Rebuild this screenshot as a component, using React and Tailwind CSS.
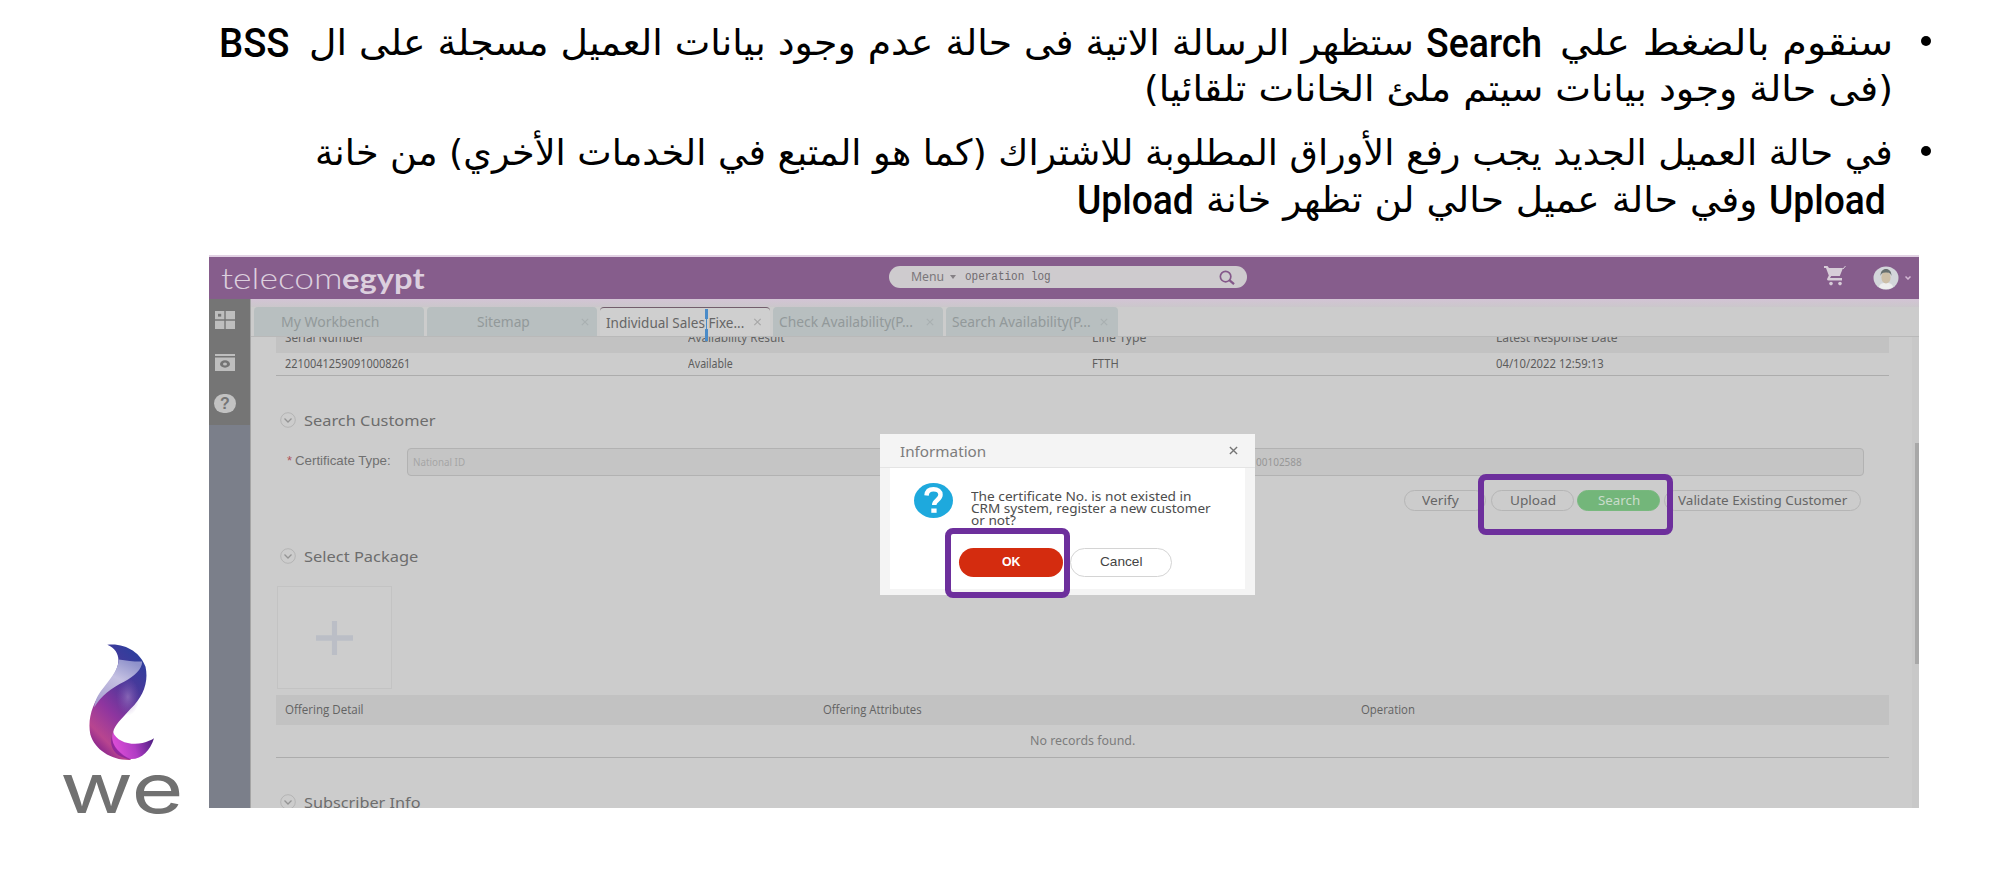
import { useLayoutEffect, useRef, useState } from "react";

// Text squeezed or stretched horizontally to the width of its box.
function Fit({ children, className = "", rtl = false }) {
  const outer = useRef(null);
  const inner = useRef(null);
  const [scale, setScale] = useState(1);
  useLayoutEffect(() => {
    setScale(outer.current.clientWidth / inner.current.offsetWidth);
  }, [children]);
  return (
    <span ref={outer} dir={rtl ? "rtl" : "ltr"} className={`flex shrink-0 ${className}`}>
      <span
        ref={inner}
        className={`block shrink-0 whitespace-nowrap ${rtl ? "origin-right" : "origin-left"}`}
        style={{ transform: `scaleX(${scale})` }}
      >
        {children}
      </span>
    </span>
  );
}

function Bullet() {
  return <span className="mt-[16px] mr-[-38px] ml-[28px] h-[10px] w-[10px] shrink-0 rounded-full bg-black" />;
}

const latin = "font-['Roboto',sans-serif] font-medium text-[41px]";

function Notes() {
  return (
    <div
      dir="rtl"
      className="flex h-[255px] flex-col pt-[20px] pr-[107px] font-['DejaVu_Sans',sans-serif] text-[36px] leading-[46px] text-black"
    >
      <div className="flex h-[46px]">
        <Bullet />
        <Fit rtl className="w-[333px]">سنقوم بالضغط علي</Fit>
        <Fit className={`mr-[18px] w-[116px] ${latin}`}>Search</Fit>
        <Fit rtl className="mr-[12px] w-[1105px]">
          ستظهر الرسالة الاتية فى حالة عدم وجود بيانات العميل مسجلة على ال
        </Fit>
        <Fit className={`mr-[19px] w-[71px] ${latin}`}>BSS</Fit>
      </div>
      <div className="flex h-[46px]">
        <Fit rtl className="w-[749px]">(فى حالة وجود بيانات سيتم ملئ الخانات تلقائيا)</Fit>
      </div>
      <div className="mt-[18px] flex h-[47px]">
        <Bullet />
        <Fit rtl className="w-[1578px]">
          في حالة العميل الجديد يجب رفع الأوراق المطلوبة للاشتراك (كما هو المتبع في الخدمات الأخري) من خانة
        </Fit>
      </div>
      <div className="flex h-[46px] pr-[7px]">
        <Fit className={`w-[117px] ${latin}`}>Upload</Fit>
        <Fit rtl className="mr-[12px] w-[551px]">وفي حالة عميل حالي لن تظهر خانة</Fit>
        <Fit className={`mr-[12px] w-[117px] ${latin}`}>Upload</Fit>
      </div>
    </div>
  );
}

function WeLogo() {
  return (
    <div className="flex w-[209px] shrink-0 flex-col pt-[389px] pl-[60px]">
      <svg className="ml-[29px] h-[117px] w-[65px]" viewBox="147 74 192 350" preserveAspectRatio="none">
        <defs>
          <linearGradient id="body" x1="0.75" y1="0" x2="0.25" y2="1">
            <stop offset="0" stopColor="#2b3f9d" />
            <stop offset="0.35" stopColor="#51379a" />
            <stop offset="0.62" stopColor="#8f359f" />
            <stop offset="0.85" stopColor="#b8458f" />
            <stop offset="1" stopColor="#7d1d8c" />
          </linearGradient>
          <linearGradient id="fold" x1="0.7" y1="0" x2="0.2" y2="1">
            <stop offset="0" stopColor="#8f92cb" />
            <stop offset="0.4" stopColor="#c5c1e2" />
            <stop offset="1" stopColor="#a89fd0" />
          </linearGradient>
          <linearGradient id="tail" x1="0" y1="0.5" x2="1" y2="0.3">
            <stop offset="0" stopColor="#e04fd8" />
            <stop offset="0.5" stopColor="#b03cc4" />
            <stop offset="1" stopColor="#4b1d80" />
          </linearGradient>
          <radialGradient id="sheen" cx="0.5" cy="0.5" r="0.5">
            <stop offset="0" stopColor="#a98acb" stopOpacity="0.55" />
            <stop offset="1" stopColor="#8a60b5" stopOpacity="0" />
          </radialGradient>
        </defs>
        <path
          d="M201 76C255 70 300 100 314 142C324 190 306 232 270 268C242 300 222 318 219 336C212 375 235 400 272 421C215 424 165 392 151 345C142 300 156 252 190 208C226 164 246 128 226 96C220 87 212 81 201 76Z"
          fill="url(#body)"
        />
        <path d="M235 120C262 124 290 128 304 126C304 150 280 170 252 186C212 206 184 228 162 264C166 238 176 222 192 202C218 168 234 146 235 120Z" fill="url(#fold)" />
        <ellipse cx="262" cy="232" rx="34" ry="56" fill="url(#sheen)" />
        <path d="M218 337C228 366 270 378 305 370C320 366 330 362 339 356C327 395 300 421 268 418C232 405 208 375 218 337Z" fill="url(#tail)" />
        <path d="M214 350C216 380 238 405 272 419C232 415 205 390 214 350Z" fill="#8a1f9c" opacity="0.8" />
      </svg>
      <Fit className="mt-[-15px] w-[123px] font-['Inter',sans-serif] text-[69px] leading-[84px] text-[#717171]">we</Fit>
    </div>
  );
}

function Cross({ className }) {
  return (
    <svg viewBox="0 0 10 10" className={`shrink-0 ${className}`} fill="none" stroke="currentColor" strokeWidth="1.5">
      <path d="M1 1l8 8M9 1l-8 8" />
    </svg>
  );
}

function Header() {
  return (
    <header className="flex h-[44px] shrink-0 items-center border-t-2 border-[#e2d2e4] bg-[#865d8c] pl-[12px]">
      <Fit className="mt-[-1px] w-[121px] font-['Lato',sans-serif] text-[29px] font-light leading-[40px] text-[#dccfde]">
        telecom
      </Fit>
      <Fit className="mt-[-1px] w-[83px] font-['Lato',sans-serif] text-[28px] font-bold leading-[40px] text-[#dccfde]">
        egypt
      </Fit>
      <div className="mt-[-2px] ml-[464px] flex h-[22px] w-[358px] shrink-0 items-center rounded-full bg-[#cecbce] pl-[22px]">
        <Fit className="w-[33px] font-['Noto_Sans',sans-serif] text-[13px] text-[#7b777b]">Menu</Fit>
        <svg viewBox="0 0 6 4" className="ml-[6px] h-[4px] w-[6px]" fill="#858085">
          <path d="M0 0h6l-3 4z" />
        </svg>
        <Fit className="ml-[9px] w-[86px] font-['Liberation_Mono',monospace] text-[12px] text-[#706c70]">
          operation log
        </Fit>
        <svg viewBox="0 0 18 16" className="ml-[167px] h-[15px] w-[18px]" fill="none" stroke="#84588a" strokeWidth="1.8">
          <circle cx="7.5" cy="7" r="5.6" />
          <path d="M11.5 10.8l5 4.2" strokeWidth="2.4" />
        </svg>
      </div>
      <svg viewBox="0 0 22 20" className="mt-[-4px] ml-[577px] h-[20px] w-[22px] shrink-0" fill="#d7cdd8">
        <path d="M0 0h3.500l1.500 2H19l-3.200 8H7.200L6 12h12v2.500H4.500c-1.300 0-1.700-1-1.200-2l1.500-3L2 2H0z" />
        <circle cx="7" cy="17.600" r="1.800" />
        <circle cx="16" cy="17.600" r="1.800" />
        <path d="M19 3l2.500-3" stroke="#d7cdd8" />
      </svg>
      <svg viewBox="0 0 26 24" className="ml-[27px] h-[24px] w-[26px] shrink-0">
        <ellipse cx="13" cy="12" rx="12.500" ry="11.500" fill="#d3d6da" />
        <path d="M6 21c1-4 4-4 7-4s6 0 7 4c-4 3-10 3-14 0z" fill="#eeeeee" />
        <ellipse cx="13" cy="11.500" rx="4.600" ry="6" fill="#cdbfa8" />
        <path d="M7.500 10c0-5 2.500-7 5.500-7s5.500 2 5.500 7c-1-3-2.500-3.500-5.500-3.500S8.500 7 7.500 10z" fill="#68706f" />
      </svg>
      <svg viewBox="0 0 6 4" className="ml-[6px] h-[4px] w-[6px] shrink-0" fill="none" stroke="#d3b8d4">
        <path d="M0.500 0.500l2.500 2.500l2.500-2.500" strokeWidth="1.500" />
      </svg>
    </header>
  );
}

function Sidebar() {
  return (
    <aside className="flex w-[42px] shrink-0 flex-col border-r border-[#a5a5a5] bg-[#7b7f8a]">
      <div className="flex h-[126px] flex-col bg-[#757575]">
        <svg viewBox="0 0 20 18" className="mt-[12px] ml-[6px] h-[18px] w-[20px]" fill="#bebebe">
          <path d="M0 0h9.300v8.300H0zM10.700 0H20v8.300h-9.300zM0 9.700h9.300V18H0zM10.700 9.700H20V18h-9.300z" />
          <rect x="3" y="2.800" width="3.200" height="2.800" fill="#757575" />
        </svg>
        <svg viewBox="0 0 20 17" className="mt-[25px] ml-[6px] h-[17px] w-[20px]" fill="#bebebe">
          <path d="M0 0h20v2H0zM0 3.500h20V17H0z" />
          <ellipse cx="10" cy="10" rx="5" ry="3.700" fill="#757575" />
          <ellipse cx="10" cy="10" rx="2" ry="1.500" fill="#bebebe" />
        </svg>
        <span className="mt-[23px] ml-[5px] flex h-[19px] w-[22px] items-center justify-center rounded-full bg-[#c2c2c2] font-['Liberation_Sans',sans-serif] text-[16px] font-bold text-[#757575]">
          ?
        </span>
      </div>
    </aside>
  );
}

const tab = "flex h-[29px] w-[170px] items-center rounded-t-[4px] text-[14px]";
const idle = "bg-[#b8bfc0] text-[#92999a]";

function Tabs() {
  return (
    <nav className="flex h-[38px] shrink-0 flex-col border-b border-[#b9b9b9] bg-[#cccccc]">
      <div className="h-[8px] shrink-0 bg-gradient-to-b from-[#d3c4d5] to-[#cbc7cb]" />
      <div className="flex gap-[3px] pl-[3px] font-['Noto_Sans',sans-serif]">
        <div className={`${tab} ${idle} pl-[27px]`}>
          <Fit className="w-[98px]">My Workbench</Fit>
        </div>
        <div className={`${tab} ${idle} pl-[50px]`}>
          <Fit className="w-[53px]">Sitemap</Fit>
          <Cross className="ml-[51px] h-[8px] w-[8px] text-[#a9b0b1]" />
        </div>
        <div className={`${tab} relative border-t border-[#735d6c] bg-[#cfcfcf] pl-[6px] text-[#666666]`}>
          <Fit className="w-[138px]">Individual Sales Fixe...</Fit>
          <Cross className="ml-[9px] h-[8px] w-[9px] text-[#a7a7a7]" />
          <span className="absolute top-[1px] left-[105px] z-10 h-[10px] w-[3px] bg-[#4a8bc8]" />
          <span className="absolute top-[11px] left-[106px] z-10 h-[10px] w-[1px] bg-[#4a8bc8]" />
          <span className="absolute top-[21px] left-[105px] z-10 h-[12px] w-[3px] bg-[#4a8bc8]" />
        </div>
        <div className={`${tab} ${idle} pl-[6px]`}>
          <Fit className="w-[134px]">Check Availability(P...</Fit>
          <Cross className="ml-[13px] h-[8px] w-[8px] text-[#a9b0b1]" />
        </div>
        <div className={`${tab} ${idle} w-[172px] pl-[6px]`}>
          <Fit className="w-[139px]">Search Availability(P...</Fit>
          <Cross className="ml-[9px] h-[8px] w-[8px] text-[#a9b0b1]" />
        </div>
      </div>
    </nav>
  );
}

function Section({ title, width, className }) {
  return (
    <div className={`flex h-[20px] items-center ${className}`}>
      <svg viewBox="0 0 16 16" className="h-[16px] w-[16px]" fill="none" stroke="#b4b4b4">
        <circle cx="8" cy="8" r="7.300" strokeWidth="1" />
        <path d="M4.500 6.500L8 10l3.500-3.500" stroke="#949494" strokeWidth="1.300" />
      </svg>
      <Fit className={`ml-[8px] font-['Noto_Sans',sans-serif] text-[15px] leading-[20px] text-[#6d6d6d] ${width}`}>
        {title}
      </Fit>
    </div>
  );
}

const pill = "flex h-[21px] shrink-0 items-center justify-center rounded-full border text-[13px]";

function Content() {
  return (
    <div className="flex flex-1 flex-col overflow-hidden pl-[25px] font-['Noto_Sans',sans-serif] text-[#636363]">
      <div className="grid h-[16px] w-[1613px] shrink-0 grid-cols-[403px_404px_404px_402px] overflow-hidden bg-[#c2c2c2] pl-[9px] text-[12px] leading-[16px]">
        <Fit className="mt-[-7px] w-[79px]">Serial Number</Fit>
        <Fit className="mt-[-7px] w-[97px]">Availability Result</Fit>
        <Fit className="mt-[-7px] w-[54px]">Line Type</Fit>
        <Fit className="mt-[-7px] w-[122px]">Latest Response Date</Fit>
      </div>
      <div className="grid h-[23px] w-[1613px] shrink-0 grid-cols-[403px_404px_404px_402px] items-center border-b border-[#acacac] pl-[9px] text-[12px] leading-[16px] text-[#5c5c5c]">
        <Fit className="w-[125px]">22100412590910008261</Fit>
        <Fit className="w-[45px]">Available</Fit>
        <Fit className="w-[27px]">FTTH</Fit>
        <Fit className="w-[108px]">04/10/2022 12:59:13</Fit>
      </div>
      <Section className="mt-[34px] shrink-0 pl-[4px]" title="Search Customer" width="w-[131px]" />
      <div className="mt-[18px] flex h-[28px] shrink-0 items-center pl-[11px]">
        <span className="mt-[-3px] w-[8px] font-['Liberation_Sans',sans-serif] text-[13px] text-[#b0555c]">*</span>
        <Fit className="mt-[-3px] w-[96px] font-['Liberation_Sans',sans-serif] text-[13px] text-[#707070]">
          Certificate Type:
        </Fit>
        <div className="ml-[16px] flex h-[28px] w-[1457px] items-center rounded-[4px] border border-[#b2b2b2] bg-[#c5c5c5] pl-[5px] text-[10px] text-[#a5a5a5]">
          <Fit className="w-[52px]">National ID</Fit>
          <Fit className="ml-[791px] w-[46px] text-[#979797]">00102588</Fit>
        </div>
      </div>
      <div className="mt-[14px] flex h-[21px] shrink-0 pl-[1128px] text-[#666666]">
        <div className={`${pill} w-[82px] border-[#b5b5b5]`}>
          <Fit className="ml-[-10px] w-[37px]">Verify</Fit>
        </div>
        <div className={`${pill} ml-[5px] w-[83px] border-[#b5b5b5]`}>
          <Fit className="w-[46px]">Upload</Fit>
        </div>
        <div className={`${pill} ml-[3px] w-[83px] border-[#78b87e] bg-[#73b67a] text-[#c9dccb]`}>
          <Fit className="w-[42px]">Search</Fit>
        </div>
        <div className={`${pill} ml-[4px] w-[197px] border-[#b5b5b5]`}>
          <Fit className="w-[169px]">Validate Existing Customer</Fit>
        </div>
      </div>
      <Section className="mt-[35px] shrink-0 pl-[4px]" title="Select Package" width="w-[114px]" />
      <div className="mt-[20px] ml-[1px] flex h-[103px] w-[115px] shrink-0 items-center justify-center border border-[#c3c3c3] bg-[#cdcdcd]">
        <svg viewBox="0 0 36 32" className="h-[34px] w-[37px]" preserveAspectRatio="none" stroke="#bbbec6" strokeWidth="5">
          <path d="M18 0v32M0 16h36" />
        </svg>
      </div>
      <div className="mt-[6px] grid h-[30px] w-[1613px] shrink-0 grid-cols-[538px_538px_537px] items-center bg-[#c2c2c2] pl-[9px] font-['Open_Sans',sans-serif] text-[12px]">
        <Fit className="w-[79px]">Offering Detail</Fit>
        <Fit className="w-[99px]">Offering Attributes</Fit>
        <Fit className="w-[54px]">Operation</Fit>
      </div>
      <div className="flex h-[33px] w-[1613px] shrink-0 items-center justify-center border-b border-[#acacac] text-[13px] text-[#7c7c7c]">
        <Fit className="w-[105px]">No records found.</Fit>
      </div>
      <Section className="mt-[34px] shrink-0 pl-[4px]" title="Subscriber Info" width="w-[117px]" />
    </div>
  );
}

function Dialog() {
  return (
    <div className="absolute top-[179px] left-[671px] flex h-[161px] w-[375px] flex-col bg-[#f4f4f4] font-['Noto_Sans',sans-serif]">
      <div className="flex h-[34px] shrink-0 items-center border-b border-[#e4e4e4] pl-[20px]">
        <Fit className="mt-[2px] w-[86px] text-[14px] text-[#7d7d7d]">Information</Fit>
        <Cross className="ml-[242px] h-[9px] w-[11px] text-[#757575]" />
      </div>
      <div className="mx-[10px] flex h-[121px] flex-col bg-white">
        <div className="flex h-[80px] pl-[24px]">
          <svg viewBox="0 0 39 35" className="mt-[15px] h-[35px] w-[39px] shrink-0" preserveAspectRatio="none">
            <ellipse cx="19.500" cy="17.500" rx="19.500" ry="17.500" fill="#1ea9dd" />
            <path d="M12.500 12.500c.3-4.500 3.300-6.300 7-6.300 4.300 0 7 2.300 7 5.600 0 5-6.300 5.200-6.300 10.200" fill="none" stroke="#fff" strokeWidth="4.500" />
            <rect x="17.300" y="25.500" width="5.300" height="4.300" fill="#fff" />
          </svg>
          <div className="mt-[22px] ml-[18px] flex flex-col text-[13px] leading-[12px] text-[#4d4d4d]">
            <Fit className="w-[221px]">The certificate No. is not existed in</Fit>
            <Fit className="w-[240px]">CRM system, register a new customer</Fit>
            <Fit className="w-[45px]">or not?</Fit>
          </div>
        </div>
        <div className="flex gap-[7px] pl-[69px] font-['Liberation_Sans',sans-serif] text-[13px]">
          <div className="flex h-[29px] w-[104px] items-center justify-center rounded-full bg-[#d42c0f] pb-[1px] text-white">
            <Fit className="w-[19px] font-bold">OK</Fit>
          </div>
          <div className="flex h-[29px] w-[102px] items-center justify-center rounded-full border border-[#d4d4d4] bg-white pb-[1px] text-[#444444]">
            <Fit className="w-[42px]">Cancel</Fit>
          </div>
        </div>
      </div>
    </div>
  );
}

export default function App() {
  return (
    <div className="flex h-[881px] w-[2000px] flex-col overflow-hidden bg-white">
      <Notes />
      <div className="flex">
        <WeLogo />
        <div className="relative flex h-[553px] w-[1710px] shrink-0 flex-col overflow-hidden bg-[#cccccc]">
          <Header />
          <div className="flex min-h-0 flex-1">
            <Sidebar />
            <div className="flex flex-1 flex-col">
              <Tabs />
              <Content />
            </div>
          </div>
          <div className="absolute top-[82px] right-0 flex h-[471px] w-[7px] flex-col bg-[#c8c8c8]">
            <div className="mt-[106px] ml-[3px] h-[221px] w-[4px] bg-[#a8a8a8]" />
          </div>
          <Dialog />
          <div className="absolute top-[273px] left-[736px] h-[70px] w-[125px] rounded-[8px] border-[6px] border-[#6d2f9c]" />
          <div className="absolute top-[219px] left-[1269px] h-[61px] w-[195px] rounded-[8px] border-[6px] border-[#6d2f9c]" />
        </div>
      </div>
    </div>
  );
}
